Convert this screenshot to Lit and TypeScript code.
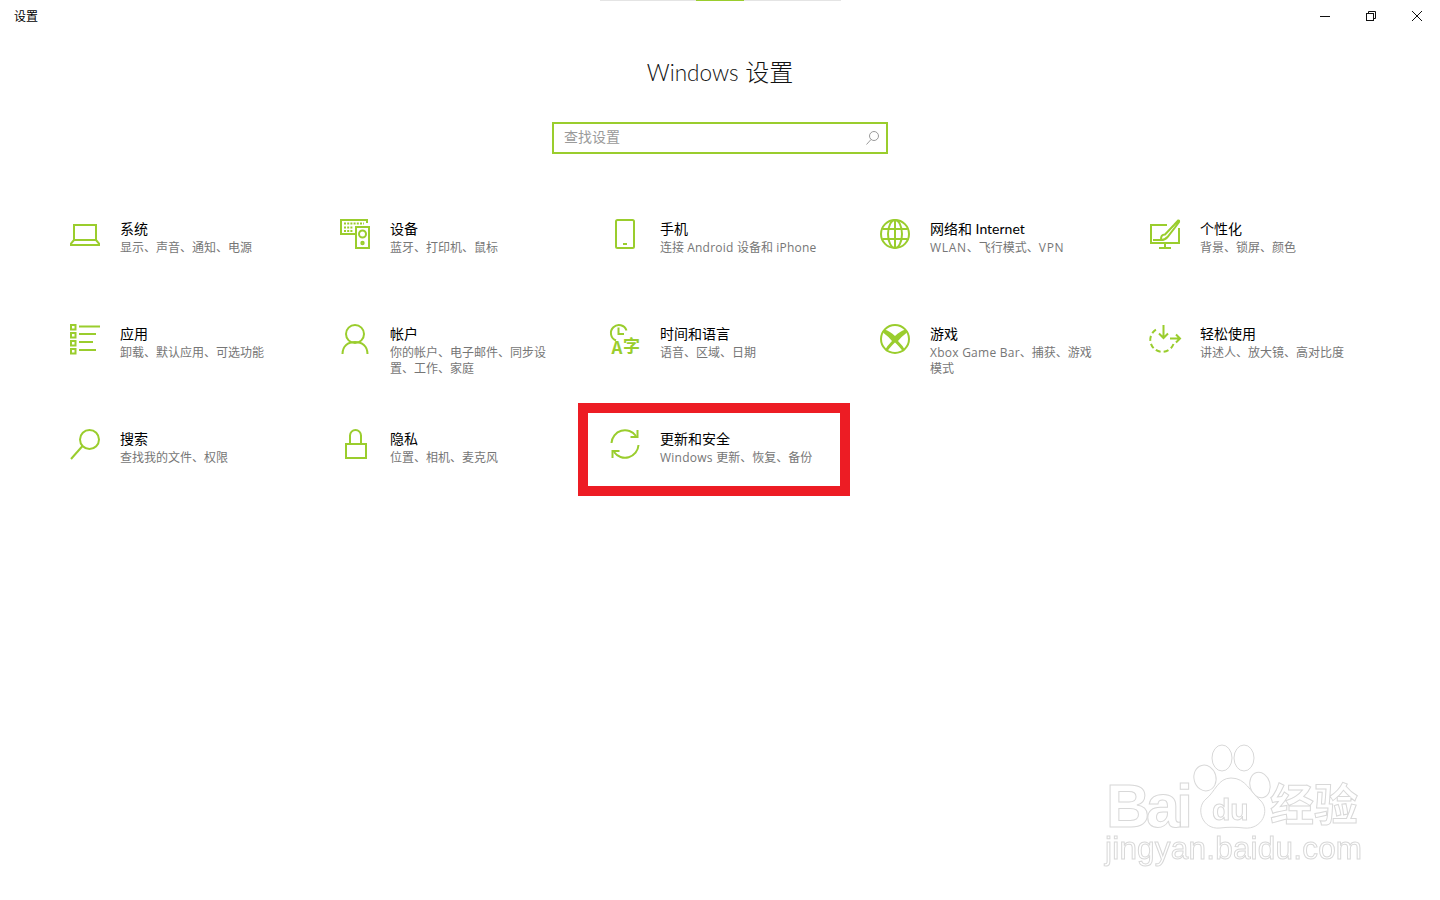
import { LitElement, html, css, svg } from "lit";
import { customElement } from "lit/decorators.js";

const icons: Record<string, unknown> = {
  system: svg`<rect x="4" y="6" width="22" height="15" /><path d="M4 21 L1 24.5 V26 H29 V24.5 L26 21" />`,
  devices: svg`<path d="M27 4 V1 H1 V15 H15" /><rect x="16" y="8" width="13" height="21" /><circle cx="22.5" cy="15" r="3.5" /><circle cx="22.5" cy="24" r="1.2" />
    <path d="M4 4.5 H24 M4 8.5 H13 M4 12 H13" stroke-dasharray="2 1.2" />`,
  phone: svg`<rect x="6" y="1" width="18" height="28" rx="1.5" /><path d="M13 25 H17" />`,
  network: svg`<circle cx="15" cy="15" r="14" /><ellipse cx="15" cy="15" rx="7" ry="14" /><path d="M2.5 10 H27.5 M2.5 20 H27.5 M15 1 V29" />`,
  personal: svg`<path d="M17 6 H1 V24 H29 V9" /><path d="M15 29 V24 M9 29 H21" /><path d="M11 21 H3 M15 15.5 L24 6 L28 1.5 Q29.5 1 29 3 L25 8.5 L17.5 18 Q15 21 11 21 Q10.5 15.5 15 15.5 Z" />`,
  apps: svg`<rect x="1" y="1" width="4.5" height="4.5" /><rect x="1" y="9" width="4.5" height="4.5" /><rect x="1" y="17" width="4.5" height="4.5" /><rect x="1" y="25" width="4.5" height="4.5" /><path d="M9 2.5 H30 M9 10 H26 M9 18 H23 M9 26 H26" />`,
  account: svg`<circle cx="15" cy="10" r="9" /><path d="M2.5 30 C2.5 22 8 18 15 18 C22 18 27.5 22 27.5 30" />`,
  time: svg`<path d="M6 16.500 A8 8 0 1 1 16.500 6.500" /><path d="M8.500 3.500 V10 H14" /><text class="glyph" x="1.500" y="30" font-size="17">A</text><text class="glyph" x="13" y="27.500" font-size="17">字</text>`,
  gaming: svg`<circle cx="15" cy="15" r="14" /><path class="solid" d="M4.500 5.500 Q10 7 15 12 Q20 7 25.500 5.500 L27 8.500 Q21 13 18 17 Q23 22 25 26 L23 27.500 Q18 21 15 18.500 Q12 21 7 27.500 L5 26 Q7 22 12 17 Q9 13 3 8.500 Z" />`,
  ease: svg`<path d="M13.500 1 V13.500 M9 9.500 L13.500 14 L18 9.500" /><path d="M20 14.500 H30 M26 10.500 L30 14.500 L26 18.500" /><path d="M23.500 20 A12 12 0 1 1 7 5" stroke-dasharray="5 3" />`,
  search: svg`<circle cx="19.500" cy="10.500" r="9.500" /><path d="M12.500 17 L1 30" />`,
  privacy: svg`<rect x="6" y="15" width="20" height="14" /><path d="M10 15 V6.500 A5.500 5.500 0 0 1 21 6.500 V15" />`,
  update: svg`<path d="M1.500 14 A13.500 13.500 0 0 1 26 7" /><path d="M27.500 1 V8 H20.500" /><path d="M28.500 16 A13.500 13.500 0 0 1 4 23" /><path d="M2.500 29 V22 H9.500" />`,
};

const rows: Array<[string, string, string]> = [
  ["system", "系统", "显示、声音、通知、电源"],
  ["devices", "设备", "蓝牙、打印机、鼠标"],
  ["phone", "手机", "连接 Android 设备和 iPhone"],
  ["network", "网络和 Internet", "WLAN、飞行模式、VPN"],
  ["personal", "个性化", "背景、锁屏、颜色"],
  ["apps", "应用", "卸载、默认应用、可选功能"],
  ["account", "帐户", "你的帐户、电子邮件、同步设|置、工作、家庭"],
  ["time", "时间和语言", "语音、区域、日期"],
  ["gaming", "游戏", "Xbox Game Bar、捕获、游戏|模式"],
  ["ease", "轻松使用", "讲述人、放大镜、高对比度"],
  ["search", "搜索", "查找我的文件、权限"],
  ["privacy", "隐私", "位置、相机、麦克风"],
  ["update", "更新和安全", "Windows 更新、恢复、备份"],
];

const latin = (text: string) =>
  text.split(/([A-Za-z][A-Za-z ]*)/).map((part) => {
    if (/^[A-Z]+$/.test(part)) return html`<span class="caps">${part}</span>`;
    if (/^[A-Za-z]/.test(part)) return html`<span class="la">${part}</span>`;
    return part;
  });

@customElement("app-root")
export class AppRoot extends LitElement {
  static styles = css`
    :host {
      display: block;
      position: relative;
      width: 1440px;
      height: 900px;
      overflow: hidden;
      background: #fff;
      font-family: "Open Sans", "Noto Sans CJK SC", sans-serif;
      color: #000;
    }
    .progress {
      position: absolute;
      top: 0;
      left: 600px;
      width: 241px;
      height: 1px;
      background: #e4e4e4;
      display: flex;
      justify-content: center;
    }
    .progress i {
      display: block;
      width: 48px;
      margin-right: 1px;
      background: #9acd2d;
    }
    .titlebar {
      display: flex;
      align-items: center;
      justify-content: space-between;
      height: 32px;
      padding-left: 14px;
      font-size: 12px;
      line-height: 16px;
    }
    .titlebar > span {
      margin-top: 2px;
    }
    .win {
      display: flex;
    }
    .win button {
      width: 46px;
      height: 32px;
      border: 0;
      padding: 0;
      background: none;
      display: flex;
      align-items: center;
      justify-content: center;
    }
    .win svg {
      width: 10px;
      height: 10px;
      fill: none;
      stroke: #111;
      stroke-width: 1;
    }
    h1 {
      margin: 23px 0 0;
      text-align: center;
      font-family: "Lato", "Noto Sans CJK SC", sans-serif;
      font-size: 24px;
      line-height: 34px;
      font-weight: 300;
      color: #111;
    }
    h1 span {
      font-size: 22.500px;
    }
    .searchbox {
      box-sizing: border-box;
      width: 336px;
      height: 32px;
      margin: 32px auto 0;
      border: 2px solid #9acd2d;
      padding: 0 7px 0 10px;
      display: flex;
      align-items: center;
      justify-content: space-between;
      font-size: 14px;
      color: #9a9a9a;
    }
    .searchbox span {
      margin-bottom: 4px;
    }
    .searchbox svg {
      width: 13px;
      height: 14px;
      fill: none;
      stroke: #9a9a9a;
      stroke-width: 1;
    }
    .grid {
      display: grid;
      grid-template-columns: repeat(5, 270px);
      grid-auto-rows: 105px;
      padding: 65px 0 0 70px;
    }
    .item {
      position: relative;
      display: flex;
      gap: 20px;
      align-items: flex-start;
    }
    .item svg.icon {
      flex: none;
      width: 30px;
      height: 30px;
      fill: none;
      stroke: #9acd2d;
      stroke-width: 2;
      overflow: visible;
    }
    .icon .solid {
      fill: #9acd2d;
      stroke: none;
    }
    .icon .glyph {
      fill: #9acd2d;
      stroke: none;
      font-family: "Noto Sans CJK SC", sans-serif;
      font-weight: 700;
    }
    .text {
      width: 165px;
    }
    .name {
      font-family: "Lato", "Noto Sans CJK SC", sans-serif;
      font-size: 14px;
      line-height: 19px;
      padding-bottom: 1.500px;
      white-space: nowrap;
    }
    .desc {
      font-size: 12px;
      line-height: 16px;
      color: #767676;
      white-space: nowrap;
    }
    .desc .la {
      letter-spacing: 0.25px;
    }
    .desc .caps {
      letter-spacing: 0.7px;
    }
    .highlight {
      position: absolute;
      left: -32px;
      top: -26px;
      width: 272px;
      height: 93px;
      box-sizing: border-box;
      border: 10px solid #ed1c24;
      pointer-events: none;
    }
    .wm {
      position: absolute;
      left: 1100px;
      top: 740px;
      width: 270px;
      height: 135px;
      color: #fff;
      -webkit-text-stroke: 1px #d8d8d8;
      filter: blur(0.4px);
    }
    .wm span {
      position: absolute;
      white-space: nowrap;
      line-height: 1;
      font-family: "Liberation Sans", sans-serif;
    }
    .wm .bai {
      left: 6px;
      top: 40px;
      font-size: 61px;
      line-height: 52px;
      font-weight: 700;
      letter-spacing: -4px;
    }
    .wm .du {
      left: 112px;
      top: 55px;
      font-size: 30px;
      font-weight: 700;
    }
    .wm .jy {
      left: 170px;
      top: 40px;
      font-size: 44px;
      font-weight: 700;
      font-family: "Noto Sans CJK SC", sans-serif;
    }
    .wm .url {
      left: 5px;
      top: 93px;
      font-size: 31.500px;
      letter-spacing: 0.200px;
    }
    .wm svg {
      position: absolute;
      left: 0;
      top: 0;
      width: 270px;
      height: 100px;
      fill: #fff;
      stroke: #d8d8d8;
      stroke-width: 1;
    }
  `;

  render() {
    return html`
      <div class="progress"><i></i></div>
      <div class="titlebar">
        <span>设置</span>
        <div class="win">
          <button><svg viewBox="0 0 10 10"><path d="M0 5.5 H10" /></svg></button>
          <button><svg viewBox="0 0 10 10"><rect x="0.5" y="2.500" width="7" height="7" /><path d="M2.500 2.500 V0.500 H9.500 V7.500 H7.500" /></svg></button>
          <button><svg viewBox="0 0 10 10"><path d="M0 0 L10 10 M10 0 L0 10" /></svg></button>
        </div>
      </div>
      <h1><span>Windows</span> 设置</h1>
      <div class="searchbox">
        <span>查找设置</span>
        <svg viewBox="0 0 13 14"><circle cx="8" cy="5" r="4.500" /><path d="M5 8.500 L0.500 13.500" /></svg>
      </div>
      <div class="grid">
        ${rows.map(
          ([icon, name, desc]) => html`
            <div class="item">
              <svg class="icon" viewBox="0 0 30 30">${icons[icon]}</svg>
              <div class="text">
                <div class="name">${name}</div>
                <div class="desc">${desc.split("|").map((line) => html`<div>${latin(line)}</div>`)}</div>
              </div>
              ${icon === "update" ? html`<div class="highlight"></div>` : ""}
            </div>
          `
        )}
      </div>
      <div class="wm">
        <svg viewBox="0 0 270 100">
          <ellipse cx="105" cy="38" rx="11" ry="13" transform="rotate(-15 105 38)" />
          <ellipse cx="122" cy="18" rx="10" ry="13" />
          <ellipse cx="144" cy="18" rx="10" ry="13" />
          <ellipse cx="160" cy="45" rx="10" ry="13" transform="rotate(-15 160 45)" />
          <path d="M131 38 C118 38 115 52 106 59 C95 68 102 90 120 88 C128 87 136 87 144 88 C162 90 171 70 160 60 C150 52 146 38 131 38 Z" />
        </svg>
        <span class="bai">Bai</span>
        <span class="du">du</span>
        <span class="jy">经验</span>
        <span class="url">jingyan.baidu.com</span>
      </div>
    `;
  }
}
